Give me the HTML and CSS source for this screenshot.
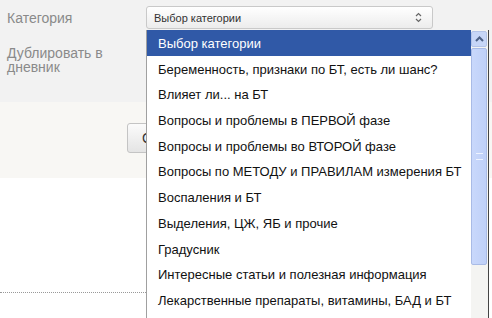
FILE: index.html
```html
<!DOCTYPE html>
<html lang="ru">
<head>
    <meta charset="UTF-8">
    <title>Категория</title>
    <link rel="stylesheet" href="styles.css">
</head>
<body>
    <div class="page">
        <!-- Fields of the form -->
        <div class="form-fields">
            <div class="field-row">
                <div class="field-label">Категория</div>
                <div class="field-control">
                    <div class="select-box">
                        <span>Выбор категории</span>
                        <span class="select-arrows">
                            <svg width="7" height="11" viewBox="0 0 7 11"><path d="M1 4 L3.5 1.5 L6 4" fill="none" stroke="#666" stroke-width="1.2"/><path d="M1 7 L3.5 9.5 L6 7" fill="none" stroke="#666" stroke-width="1.2"/></svg>
                        </span>
                    </div>
                </div>
            </div>
            <div class="field-row">
                <div class="field-label narrow">Дублировать в дневник</div>
            </div>
        </div>

        <!-- Buttons -->
        <div class="form-actions">
            <button class="save-button">Сохранить</button>
        </div>

        <div class="bottom-area">
            <div class="dotted-line"></div>
        </div>

        <!-- Opened list of the select -->
        <div class="dropdown">
            <ul class="dropdown-list">
                <li class="selected">Выбор категории</li>
                <li>Беременность, признаки по БТ, есть ли шанс?</li>
                <li>Влияет ли... на БТ</li>
                <li>Вопросы и проблемы в ПЕРВОЙ фазе</li>
                <li>Вопросы и проблемы во ВТОРОЙ фазе</li>
                <li>Вопросы по МЕТОДУ и ПРАВИЛАМ измерения БТ</li>
                <li>Воспаления и БТ</li>
                <li>Выделения, ЦЖ, ЯБ и прочие</li>
                <li>Градусник</li>
                <li>Интересные статьи и полезная информация</li>
                <li>Лекарственные препараты, витамины, БАД и БТ</li>
            </ul>
            <div class="scrollbar">
                <div class="scroll-up">
                    <svg width="9" height="6" viewBox="0 0 9 6"><path d="M1 5 L4.5 1.5 L8 5" fill="none" stroke="#4d6185" stroke-width="2"/></svg>
                </div>
                <div class="scroll-thumb">
                    <div class="grip"></div>
                </div>
            </div>
        </div>
    </div>
</body>
</html>
```

FILE: styles.css
```css
body {
    margin: 0;
    font-family: "Liberation Sans", Arial, sans-serif;
    background-color: #ffffff;
}
.page {
    position: relative;
    width: 492px;
    height: 318px;
    overflow: hidden;
}
.form-fields {
    background-color: #f2f2f2;
    height: 102px;
    padding-top: 6px;
    box-sizing: border-box;
}
.field-row {
    display: flex;
    margin-bottom: 12px;
}
.field-label {
    width: 146px;
    padding-left: 7px;
    box-sizing: border-box;
    font-size: 14px;
    line-height: 14px;
    color: #8a8a8a;
    padding-top: 5px;
}
.field-label.narrow {
    width: 110px;
}
.select-box {
    width: 287px;
    height: 23px;
    box-sizing: border-box;
    border: 1px solid #c9c9c9;
    border-radius: 3px;
    background: linear-gradient(#ffffff, #ececec);
    display: flex;
    align-items: center;
    justify-content: space-between;
    padding: 0 10px 0 7px;
    font-size: 11px;
    color: #333;
}
.select-arrows {
    display: flex;
}
.form-actions {
    background-color: #f8f7f4;
    height: 76px;
    padding-top: 21px;
    padding-left: 127px;
    box-sizing: border-box;
}
.save-button {
    height: 30px;
    padding: 0 15px 0 14px;
    border: 1px solid #c4c4c4;
    border-radius: 3px;
    background: linear-gradient(#fbfbfb, #e4e4e4);
    font-family: "Liberation Sans", Arial, sans-serif;
    font-size: 14px;
    color: #333;
    text-align: left;
    width: 110px;
}
.bottom-area {
    padding-top: 114px;
}
.dotted-line {
    width: 146px;
    border-top: 1px dotted #999;
}
/* the open list lies over the form */
.dropdown {
    position: absolute;
    left: 146px;
    top: 30px;
    width: 343px;
    height: 300px;
    display: flex;
    background-color: #ffffff;
    border-left: 1px solid #a0a0a0;
    border-right: 1px solid #444;
    box-sizing: border-box;
}
.dropdown-list {
    list-style: none;
    margin: 0;
    padding: 0;
    flex: 1;
}
.dropdown-list li {
    height: 25.7px;
    line-height: 27.5px;
    overflow: hidden;
    padding-left: 11px;
    font-size: 13px;
    color: #111;
    white-space: nowrap;
}
.dropdown-list li.selected {
    background-color: #3059a7;
    color: #ffffff;
}
.scrollbar {
    width: 16px;
    background-color: #f4f4f2;
    padding: 1px 1px 0 0;
    display: flex;
    flex-direction: column;
}
.scroll-up {
    height: 16px;
    box-sizing: border-box;
    border: 1px solid #b4c4e8;
    border-radius: 2px;
    background: #c7d6f7;
    display: flex;
    align-items: center;
    justify-content: center;
}
.scroll-thumb {
    margin-top: 1px;
    height: 217px;
    box-sizing: border-box;
    border: 1px solid #a9bbe6;
    border-radius: 2px;
    background: linear-gradient(90deg, #c9d8fb, #bfd0f8);
    display: flex;
    align-items: center;
    justify-content: center;
}
.grip {
    width: 7px;
    height: 5px;
    border-top: 1px solid #eef3ff;
    border-bottom: 1px solid #eef3ff;
}
```
